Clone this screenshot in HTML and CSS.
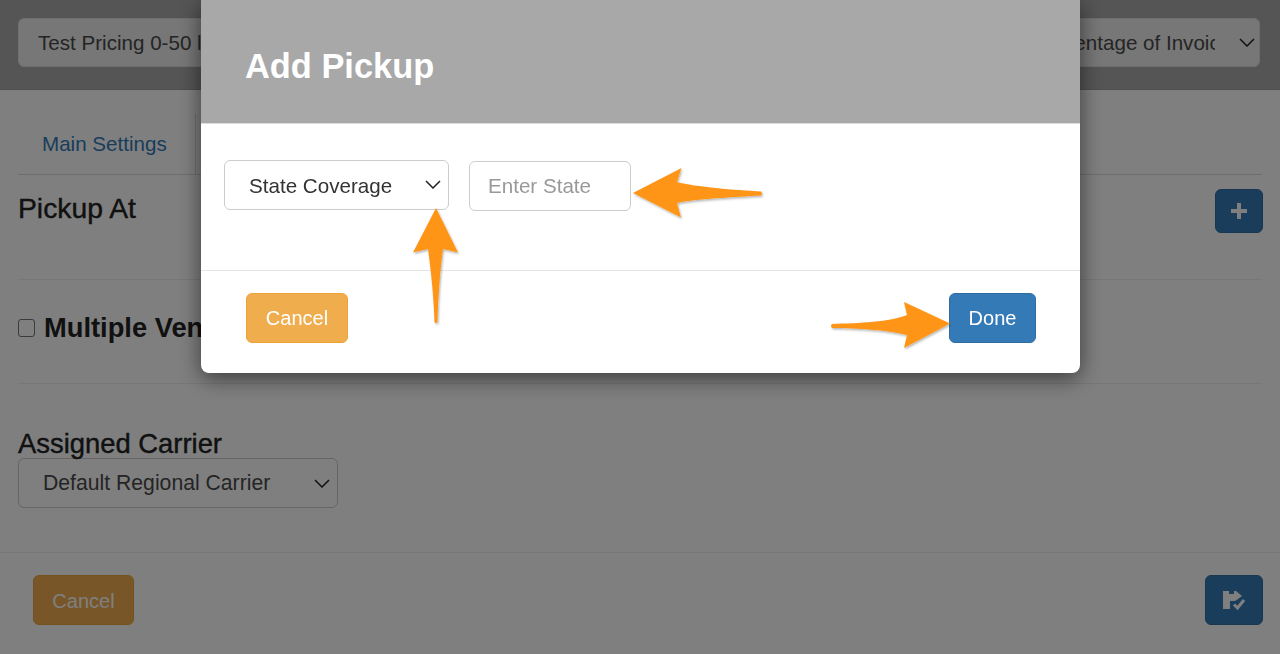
FILE: index.html
```html
<!DOCTYPE html>
<html lang="en">
<head>
<meta charset="utf-8">
<title>Add Pickup</title>
<link rel="stylesheet" href="styles.css">
</head>
<body>
<div class="page">
  <header class="topbar">
    <div class="select top-left"><span class="select-text">Test Pricing 0-50 lbs</span></div>
    <div class="select top-right">
      <span class="select-text">Percentage of Invoice</span>
      <svg class="chevron" viewBox="0 0 16 9"><path d="M1 1l7 7 7-7"/></svg>
    </div>
  </header>

  <nav class="tabs">
    <a class="tab-link">Main Settings</a>
    <div class="tab-active"></div>
  </nav>

  <section class="row row-pickup">
    <h3 class="heading">Pickup At</h3>
    <button class="btn btn-primary btn-plus">
      <svg class="icon-plus" viewBox="0 0 16 16"><path d="M8 0v16M0 8h16"/></svg>
    </button>
  </section>

  <section class="row row-vendor">
    <span class="checkbox"></span>
    <strong class="vendor-label">Multiple Vendors</strong>
  </section>

  <section class="row-carrier">
    <h3 class="heading heading-carrier">Assigned Carrier</h3>
    <div class="select carrier-select">
      <span class="select-text">Default Regional Carrier</span>
      <svg class="chevron" viewBox="0 0 16 9"><path d="M1 1l7 7 7-7"/></svg>
    </div>
  </section>

  <footer class="page-footer">
    <button class="btn btn-warning btn-page-cancel">Cancel</button>
    <button class="btn btn-primary btn-save">
      <svg class="icon-save" viewBox="0 0 22 20"><path d="M0 1H6V4H11V1H13L19 6L15 9L12 11H7V19H0Z"/><path class="check" d="M11 14.500L14.500 18L21 10"/></svg>
    </button>
  </footer>
</div>

<div class="backdrop">
  <div class="modal">
    <div class="modal-header"><h2 class="modal-title">Add Pickup</h2></div>
    <div class="modal-body">
      <div class="select modal-select">
        <span class="select-text">State Coverage</span>
        <svg class="chevron" viewBox="0 0 16 9"><path d="M1 1l7 7 7-7"/></svg>
      </div>
      <div class="modal-input">Enter State</div>
    </div>
    <div class="modal-footer">
      <button class="btn btn-warning btn-modal">Cancel</button>
      <button class="btn btn-primary btn-modal btn-done">Done</button>
    </div>
  </div>
</div>

<svg class="annotations" viewBox="0 0 1280 654">
  <defs>
    <filter id="arrow-shadow" x="-20%" y="-20%" width="140%" height="140%">
      <feDropShadow dx="1" dy="1.500" stdDeviation="1.200" flood-color="#000" flood-opacity="0.3"/>
    </filter>
  </defs>
  <g class="arrow" filter="url(#arrow-shadow)">
    <path d="M633 193L681.500 168L677 182C695 187 735 190 761 191.500Q763 193.500 761 195.500C735 197 695 199 677 203L681 217.500Z"/>
    <path d="M436 208L458 252.500L443 249C440 270 438 300 437.500 322Q436 324 434.500 322C434 300 431 270 428 249L413 252.500Z"/>
    <path d="M950 323.500L904 348L907 335C885 330 860 328 832 328Q830 326 832 324C860 323 890 322 907 315L904 302Z"/>
  </g>
</svg>
</body>
</html>
```

FILE: styles.css
```css
* { box-sizing: border-box; }

html, body {
  margin: 0;
  height: 654px;
  overflow: hidden;
}

body {
  background: #fff;
  color: #222;
  font-family: "Liberation Sans", Arial, sans-serif;
  font-size: 20.6px;
}

.page {
  display: flex;
  flex-direction: column;
  height: 654px;
}

/* Top bar */
.topbar {
  display: flex;
  justify-content: space-between;
  height: 90px;
  padding: 18px 20px 0 18px;
  background: #aaa;
  border-bottom: 1px solid #a0a0a0;
}

/* Select */
.select {
  display: flex;
  align-items: center;
  height: 49px;
  border: 1px solid #ddd;
  border-radius: 6px;
  background: #fff;
  color: #4a4a4a;
}

.select-text {
  flex: 1;
  min-width: 0;
  overflow: hidden;
  white-space: nowrap;
}

.chevron {
  width: 16px;
  height: 9px;
  flex: none;
  fill: none;
  stroke: #222;
  stroke-width: 1.500;
}

.top-left {
  width: 400px;
  padding-left: 19px;
  background: #eee;
}

.top-right {
  width: 251px;
  padding: 0 4px 0 22px;
  background: #eee;
}

.top-right .chevron { margin-left: 24px; }

/* Tabs */
.tabs {
  display: flex;
  align-items: center;
  height: 85px;
  margin: 0 18px;
  padding-top: 24px;
  border-bottom: 1px solid #ddd;
}

.tab-link {
  margin-left: 24px;
  color: #337ab7;
}

.tab-active {
  width: 1px;
  height: 61px;
  margin-left: 28px;
  background: #ddd;
}

/* Rows */
.row {
  display: flex;
  margin: 0 18px;
  border-bottom: 1px solid #eee;
}

.row-pickup {
  justify-content: space-between;
  height: 105px;
  padding-top: 14px;
}

.heading {
  margin: 0;
  font-size: 28.300px;
  font-weight: 400;
  line-height: 38px;
  color: #222;
  -webkit-text-stroke: 0.4px #222;
}

.heading-carrier {
  font-size: 27.400px;
  line-height: 24px;
}

.row-vendor {
  align-items: center;
  height: 104px;
  padding-bottom: 7px;
}

.checkbox {
  width: 17px;
  height: 18px;
  margin-right: 9px;
  border: 1.500px solid #777;
  border-radius: 3px;
  background: #fff;
}

.vendor-label { font-size: 27.300px; }

.row-carrier {
  height: 169px;
  padding: 48px 18px 0;
  border-bottom: 1px solid #eee;
}

.carrier-select {
  width: 320px;
  height: 50px;
  margin-top: 2px;
  padding: 0 7px 0 24px;
  border-color: #ccc;
  font-size: 21.200px;
}

/* Page footer */
.page-footer {
  display: flex;
  justify-content: space-between;
  padding: 22px 17px 0 33px;
}

/* Buttons */
.btn {
  height: 50px;
  padding: 0;
  border: 1px solid transparent;
  border-radius: 6px;
  color: #fff;
  font-family: inherit;
  font-size: 20px;
}

.btn-primary {
  background: #337ab7;
  border-color: #2e6da4;
}

.btn-warning {
  background: #f0ad4e;
  border-color: #eea236;
}

.btn-plus {
  width: 48px;
  height: 44px;
  display: flex;
  align-items: center;
  justify-content: center;
  margin-right: -1px;
}

.icon-plus {
  width: 16px;
  height: 16px;
  fill: none;
  stroke: #fff;
  stroke-width: 4;
}

.btn-page-cancel {
  width: 101px;
  padding-top: 3px;
}

.btn-save {
  width: 58px;
  display: flex;
  align-items: center;
  justify-content: center;
}

.icon-save {
  width: 22px;
  height: 20px;
  fill: #fff;
}

.icon-save .check {
  fill: none;
  stroke: #fff;
  stroke-width: 3;
}

/* Modal */
.backdrop {
  position: fixed;
  inset: 0;
  display: flex;
  justify-content: center;
  align-items: flex-start;
  background: rgba(0, 0, 0, 0.5);
}

.modal {
  width: 879px;
  margin-left: 1px;
  background: #fff;
  border-radius: 0 0 8px 8px;
  box-shadow: 0 5px 22px rgba(0, 0, 0, 0.55);
  overflow: hidden;
}

.modal-header {
  height: 124px;
  padding: 48px 44px 0;
  background: #a8a8a8;
  border-bottom: 1px solid #ddd;
}

.modal-title {
  margin: 0;
  color: #fff;
  font-size: 34.400px;
  font-weight: 700;
  line-height: 37px;
}

.modal-body {
  display: flex;
  gap: 20px;
  align-items: flex-start;
  height: 147px;
  padding: 36px 23px 0;
  border-bottom: 1px solid #e5e5e5;
}

.modal-select {
  width: 225px;
  height: 50px;
  padding: 2px 7px 0 24px;
  border-color: #ccc;
  color: #333;
}

.modal-select .chevron { margin-top: -4px; }

.modal-input {
  width: 162px;
  height: 50px;
  margin-top: 1px;
  padding-left: 18px;
  border: 1px solid #ccc;
  border-radius: 6px;
  color: #999;
  line-height: 48px;
}

.modal-footer {
  display: flex;
  justify-content: space-between;
  height: 102px;
  padding: 22px 44px 0 45px;
}

.btn-modal { width: 102px; }

.btn-done { width: 87px; }

/* Annotation arrows */
.annotations {
  position: fixed;
  inset: 0;
  width: 1280px;
  height: 654px;
  pointer-events: none;
}

.arrow { fill: #ff9517; }
```
